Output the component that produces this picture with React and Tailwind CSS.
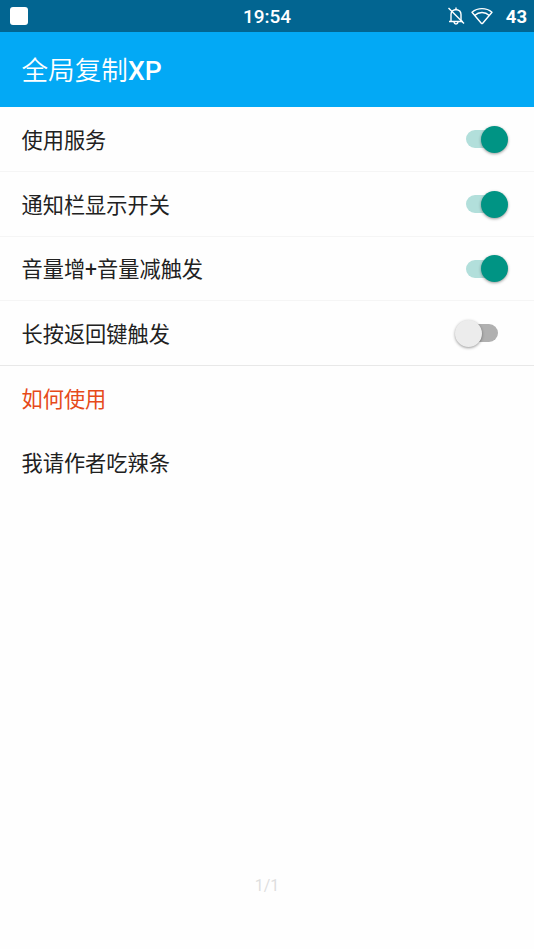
import { useState } from 'react'

const settings = [
  { id: 'service', label: '使用服务', on: true, height: 'h-[65px]', border: 'border-[#f5f5f5]' },
  { id: 'notification', label: '通知栏显示开关', on: true, height: 'h-[65px]', border: 'border-[#f5f5f5]' },
  { id: 'volume', label: '音量增+音量减触发', on: true, height: 'h-[64px]', border: 'border-[#f5f5f5]' },
  { id: 'back', label: '长按返回键触发', on: false, height: 'h-[65px]', border: 'border-[#e8e8e8]' },
]

function Switch({ on, label, onToggle }) {
  return (
    <button
      role="switch"
      aria-checked={on}
      aria-label={label}
      onClick={onToggle}
      className="relative w-8 h-[18px] mr-9 shrink-0"
    >
      <span className={`block w-full h-full rounded-full ${on ? 'bg-[#b2dfdb]' : 'bg-[#b0b0b0]'}`} />
      {/* Thumb overhangs the track on either side */}
      <span
        className={`absolute -top-[4.5px] size-[27px] rounded-full shadow-[0_1px_3px_rgba(0,0,0,0.4)] ${
          on ? 'left-[15px] bg-[#009484]' : '-left-[11px] bg-[#ececec]'
        }`}
      />
    </button>
  )
}

// Clock is centred on the full width, so both sides take equal space.
function StatusBar() {
  return (
    <div className="flex items-center h-8 bg-[#026591] text-white">
      <div className="flex-1 pl-[10px]">
        <div className="size-[18px] rounded-[3px] bg-white" />
      </div>
      <span className="text-[19px] leading-8 font-medium pt-px pr-[3px]">19:54</span>
      <div className="flex flex-1 items-center justify-end pr-[7px]">
        <svg width="18" height="20" viewBox="0 0 18 20" fill="none" stroke="white" strokeWidth="1.4" className="mr-[6px]">
          <path d="M2 15.5H16M4 15.5V8.5C4 5.5 6 3.9 9 3.5C12 3.9 14 5.5 14 8.5V15.5M9 3.7V1.5M7 16.2C7.3 18.6 10.7 18.6 11 16.2" />
          <path d="M1.5 2L17 17.5" />
        </svg>
        <svg width="22" height="18" viewBox="0 0 22 18" fill="none" stroke="white" strokeWidth="1.4" strokeLinejoin="round" className="mr-[13px]">
          <path d="M1 5.2C6.7 0.4 15.3 0.4 21 5.2L11.7 16.2Q11 17 10.3 16.2Z" />
          <path d="M3.6 8.4C8 4.5 14 4.5 18.4 8.4" />
        </svg>
        <span className="text-[18.5px] leading-8 font-bold pt-px">43</span>
      </div>
    </div>
  )
}

export default function App() {
  const [values, setValues] = useState(() => Object.fromEntries(settings.map(s => [s.id, s.on])))

  function toggle(id) {
    setValues(v => ({ ...v, [id]: !v[id] }))
  }

  return (
    <div className="flex flex-col w-[534px] h-[949px] bg-[#fefefe] font-[Roboto,'Noto_Sans_CJK_SC',sans-serif] text-[#212121]">
      <StatusBar />
      <header className="flex items-center h-[75px] px-[21.5px] pt-[2px] bg-[#03a9f5]">
        <h1 className="text-[26.6px] font-medium text-white">
          <span className="font-[350]">全局复制</span>XP
        </h1>
      </header>

      <main className="text-[21.2px]">
        {settings.map(s => (
          <div key={s.id} className={`flex items-center justify-between pl-[21.5px] border-b ${s.height} ${s.border}`}>
            <span className="pt-[3px]">{s.label}</span>
            <Switch on={values[s.id]} label={s.label} onToggle={() => toggle(s.id)} />
          </div>
        ))}
        <div className="flex items-center h-[65px] px-[21.5px] pt-[2px] text-[#e64a19]">如何使用</div>
        <div className="flex items-center h-[65px] px-[21.5px]">我请作者吃辣条</div>
      </main>

      <footer className="mt-auto mb-[51px] text-center text-base text-[#dedede]">1/1</footer>
    </div>
  )
}
